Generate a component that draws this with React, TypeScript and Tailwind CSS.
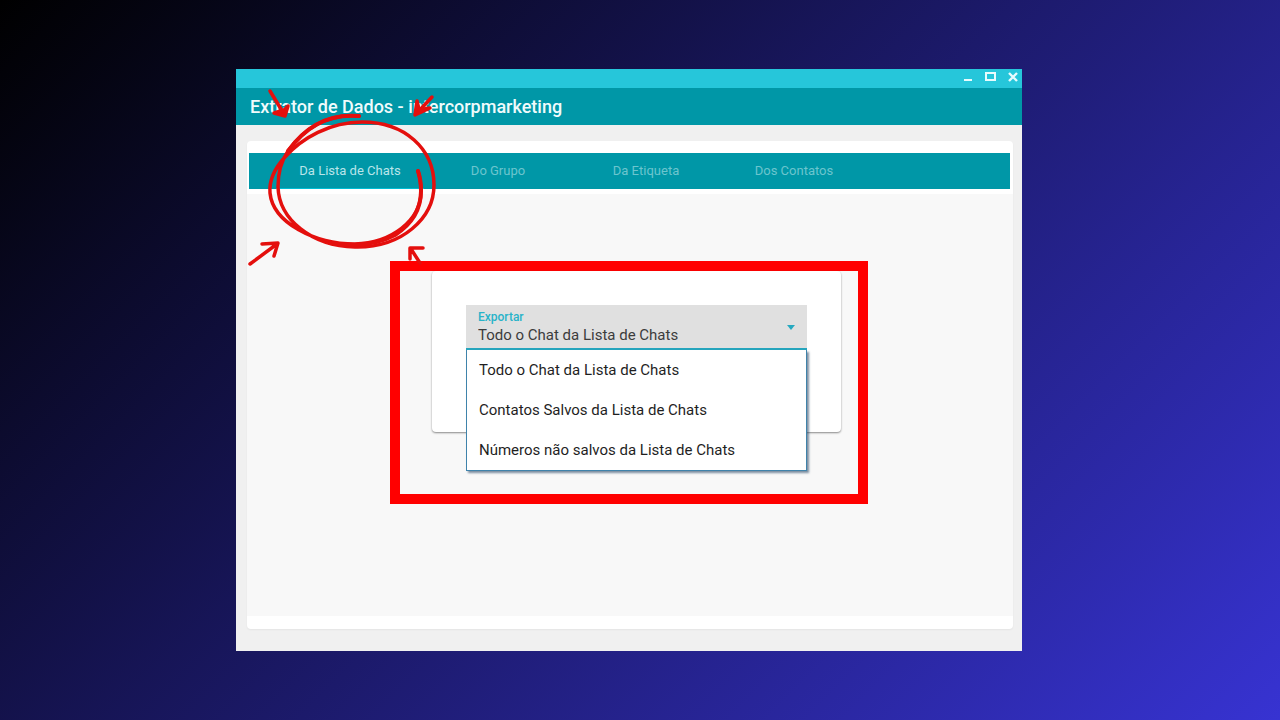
import { useState } from 'react';

const tabs = ['Da Lista de Chats', 'Do Grupo', 'Da Etiqueta', 'Dos Contatos'];

const exportOptions = [
  'Todo o Chat da Lista de Chats',
  'Contatos Salvos da Lista de Chats',
  'Números não salvos da Lista de Chats',
];

function HandDrawnMarks() {
  return (
    <svg
      className="pointer-events-none absolute top-4 left-3"
      width="200"
      height="184"
      viewBox="248 85 200 184"
      fill="none"
      stroke="#e40f0d"
      strokeWidth="3.5"
      strokeLinecap="round"
      strokeLinejoin="round"
      aria-hidden="true"
    >
      {/* circle */}
      <path d="M359 116C325 113 303 130 288 151C281 161 278 174 278 187C279 219 311 246 355 247C402 248 434 218 434 185C434 149 405 122 362 122C330 122 302 138 285 157C274 169 269 181 270 193C273 223 315 244 355 244C391 243 421 221 421 191C421 184 420 177 418 171" />
      <path d="M359 116C325 113 303 130 288 151M330 243C360 248 382 242 395 235C412 224 421 209 421 191C421 184 420 177 418 171" strokeWidth="4" />

      {/* arrows */}
      <path d="M270 91L284 114" />
      <path d="M274 113L285 116L288 106L284 110Z" fill="#e40f0d" />
      <path d="M432 97L417 113" />
      <path d="M417 101L415 115L430 108L419 110Z" fill="#e40f0d" />
      <path d="M250 264L277 244M262 244L278 243L274 256" />
      <path d="M420 263L411 249M410 259L410 248L423 248" />
    </svg>
  );
}

export default function App() {
  const [activeTab, setActiveTab] = useState(tabs[0]);
  const [selected, setSelected] = useState(exportOptions[0]);

  return (
    <main className="min-h-screen bg-[linear-gradient(135deg,#000,#3733d2)] pt-[69px] pr-[258px] pb-[69px] pl-[236px] font-[Roboto,sans-serif]">
      <div className="relative bg-[#f0f0f0]">
        {/* TITLE BAR */}
        <div className="flex h-[19px] items-center justify-end gap-3 bg-[#26c6da] pr-1 pb-1 text-[#e8fbfd]">
          <button type="button" aria-label="Minimizar">
            <svg width="10" height="10" viewBox="0 0 10 10" stroke="currentColor" strokeWidth="2">
              <path d="M1 8H9" />
            </svg>
          </button>
          <button type="button" aria-label="Maximizar">
            <svg width="11" height="10" viewBox="0 0 11 10" fill="none" stroke="currentColor" strokeWidth="2">
              <path d="M1 1H10V8H1Z" />
            </svg>
          </button>
          <button type="button" aria-label="Fechar">
            <svg width="10" height="10" viewBox="0 0 10 10" stroke="currentColor" strokeWidth="2.4">
              <path d="M1 1L9 9M9 1L1 9" />
            </svg>
          </button>
        </div>

        <header className="flex h-[37px] items-center bg-[#0097a7] px-[14px]">
          <h1 className="text-lg font-medium text-[#f0fbfc]">Extrator de Dados - intercorpmarketing</h1>
        </header>

        <div className="pt-4 pr-[9px] pb-[22px] pl-[11px]">
          <div className="rounded bg-white pt-3 pb-[13px] shadow-xs">
            {/* TABS */}
            <nav className="mr-[3px] ml-[2px] flex h-9 bg-[#0097a7] pl-[27px]">
              {tabs.map((tab) => (
                <button
                  key={tab}
                  type="button"
                  onClick={() => setActiveTab(tab)}
                  className={`w-[148px] border-b text-[13px]
                    ${activeTab === tab ? 'border-[#00bcd4] text-[#b9e5ea]' : 'border-transparent text-[#6cc5ce]'}
                  `}
                >
                  {tab}
                </button>
              ))}
            </nav>

            {/* CONTENT */}
            <div className="mt-[5px] min-h-[422px] bg-[#f8f8f8] pt-[67px] pr-[2px]">
              <div className="mx-auto max-w-[478px] border-10 border-[#ff0000] pr-[17px] pb-[62px] pl-8">
                <div className="rounded-sm bg-white px-[34px] pt-[34px] pb-[82px] shadow-[0_1px_2px_rgba(0,0,0,0.45)]">
                  <div className="relative flex h-[45px] flex-col border-b-2 border-[#26a5bd] bg-[#e0e0e0] px-3 pt-1">
                    <label htmlFor="export" className="text-xs leading-4 font-medium text-[#29b3c9]">
                      Exportar
                    </label>
                    <select
                      id="export"
                      value={selected}
                      onChange={(e) => setSelected(e.target.value)}
                      className="appearance-none text-[15px] leading-5 text-[#3c3c3c] outline-none"
                    >
                      {exportOptions.map((opt) => (
                        <option key={opt}>{opt}</option>
                      ))}
                    </select>
                    <svg className="pointer-events-none absolute top-5 right-3" width="8" height="5" viewBox="0 0 8 5" fill="#26a9c0">
                      <path d="M0 0H8L4 5Z" />
                    </svg>

                    {/* MENU */}
                    <ul className="absolute top-[45px] right-0 left-0 border border-t-0 border-[#3f83ab] bg-white shadow-[2px_2px_2px_rgba(40,70,100,0.6)]">
                      {exportOptions.map((opt) => (
                        <li key={opt}>
                          <button
                            type="button"
                            onClick={() => setSelected(opt)}
                            className="h-10 w-full px-3 text-left text-[15px] text-[#1f1f1f]"
                          >
                            {opt}
                          </button>
                        </li>
                      ))}
                    </ul>
                  </div>
                </div>
              </div>
            </div>
          </div>
        </div>

        <HandDrawnMarks />
      </div>
    </main>
  );
}
